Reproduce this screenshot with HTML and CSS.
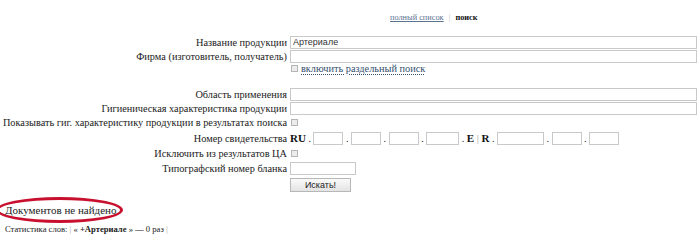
FILE: index.html
```html
<!DOCTYPE html>
<html lang="ru">
<head>
    <meta charset="UTF-8">
    <title>Поиск</title>
    <link rel="stylesheet" href="styles.css">
</head>
<body>
    <div class="page">
        <div class="top-nav">
            <a href="#">полный список</a>
            <span class="sep">|</span>
            <b>поиск</b>
        </div>
        <form class="search-form">
            <div class="form-row">
                <label>Название продукции</label>
                <div class="field"><input type="text" class="text-wide" value="Артериале"></div>
            </div>
            <div class="form-row">
                <label>Фирма (изготовитель, получатель)</label>
                <div class="field"><input type="text" class="text-wide"></div>
            </div>
            <div class="form-row row-small">
                <label></label>
                <div class="field"><input type="checkbox"> <a href="#" class="dotted">включить раздельный поиск</a></div>
            </div>
            <div class="form-row row-blank"></div>
            <div class="form-row">
                <label>Область применения</label>
                <div class="field"><input type="text" class="text-wide"></div>
            </div>
            <div class="form-row">
                <label>Гигиеническая характеристика продукции</label>
                <div class="field"><input type="text" class="text-wide"></div>
            </div>
            <div class="form-row row-mid">
                <label>Показывать гиг. характеристику продукции в результатах поиска</label>
                <div class="field"><input type="checkbox"></div>
            </div>
            <div class="form-row row-big">
                <label>Номер свидетельства</label>
                <div class="field number">
                    <b class="big">RU</b>
                    <span>.</span><input type="text" class="n1">
                    <span>.</span><input type="text" class="n2">
                    <span>.</span><input type="text" class="n3">
                    <span>.</span><input type="text" class="n4">
                    <span>. <b class="big">E</b> <i class="bar">|</i> <b class="big">R</b> .</span><input type="text" class="n5">
                    <span>.</span><input type="text" class="n6">
                    <span>.</span><input type="text" class="n7">
                </div>
            </div>
            <div class="form-row row-mid">
                <label>Исключить из результатов ЦА</label>
                <div class="field"><input type="checkbox"></div>
            </div>
            <div class="form-row row-mid">
                <label>Типографский номер бланка</label>
                <div class="field"><input type="text" class="text-short"></div>
            </div>
            <div class="form-row row-big">
                <label></label>
                <div class="field"><input type="button" value="Искать!" class="btn"></div>
            </div>
        </form>
        <div class="result">
            <p class="not-found">Документов не найдено.</p>
            <span class="mark"></span>
        </div>
        <p class="stats">Статистика слов: <span class="bar">|</span> « <b>+Артериале</b> » — 0 раз <span class="bar">|</span></p>
    </div>
</body>
</html>
```

FILE: styles.css
```css
* {
    padding: 0;
    margin: 0;
    box-sizing: border-box;
}
body {
    font-family: "Liberation Serif", "Times New Roman", serif;
    font-size: 10.3px;
    color: #222;
    background: #fff;
}
a {
    color: #3d5a78;
}
.page {
    width: 700px;
    height: 240px;
    overflow: hidden;
}
.top-nav {
    height: 35px;
    padding-top: 13px;
    padding-left: 390px;
    font-size: 8.3px;
    line-height: 10px;
}
.top-nav a {
    color: #5b7290;
}
.top-nav .sep {
    color: #bbb;
    margin: 0 3px;
}
.top-nav b {
    color: #111;
}
.form-row {
    display: flex;
    align-items: center;
    height: 14px;
}
.form-row label {
    width: 288px;
    flex-shrink: 0;
    text-align: right;
    padding-right: 1px;
    white-space: nowrap;
}
.form-row .field {
    display: flex;
    align-items: center;
    padding-left: 2px;
}
.row-small {
    height: 11px;
}
.row-blank {
    height: 13px;
}
.row-mid {
    height: 15px;
}
.row-big {
    height: 16px;
}
.form-row input[type="text"] {
    height: 13px;
    border: 1px solid #c9c9c9;
    background: #fff;
    font-family: "Liberation Sans", Arial, sans-serif;
    font-size: 9px;
    color: #333;
    padding: 0 2px;
    outline: none;
}
.text-wide {
    width: 407px;
}
.text-short {
    width: 66px;
}
.form-row input[type="checkbox"] {
    appearance: none;
    width: 7px;
    height: 7px;
    margin: 0 1px;
    border: 1px solid #b5b5b5;
    background: #ececec;
}
.dotted {
    text-decoration: underline dotted;
    text-underline-offset: 2px;
    color: #34506e;
    margin-left: 2px;
}
.number span {
    padding: 0 2.5px;
    white-space: nowrap;
}
.number .big {
    font-size: 11px;
    color: #111;
}
.number .bar {
    font-style: normal;
    color: #999;
}
.number .n1, .number .n2, .number .n3, .number .n6, .number .n7 {
    width: 30px;
}
.number .n4 {
    width: 33px;
}
.number .n5 {
    width: 47px;
}
.btn {
    width: 61px;
    height: 14px;
    margin-top: 1px;
    border: 1px solid #b7b7b7;
    background: linear-gradient(#fafafa, #e3e3e3);
    font-family: "Liberation Sans", Arial, sans-serif;
    font-size: 9px;
    color: #222;
}
.result {
    position: relative;
    margin-top: 6px;
    height: 26px;
    padding-top: 5px;
}
.not-found {
    padding-left: 5px;
    font-size: 11px;
    line-height: 14px;
}
.mark {
    position: absolute;
    left: -4px;
    top: -1px;
    width: 127px;
    height: 26px;
    border: 3px solid #c8102e;
    border-radius: 50%;
}
.stats {
    padding-left: 5px;
    font-size: 8.6px;
    line-height: 10px;
}
.stats .bar {
    color: #aaa;
}
```
